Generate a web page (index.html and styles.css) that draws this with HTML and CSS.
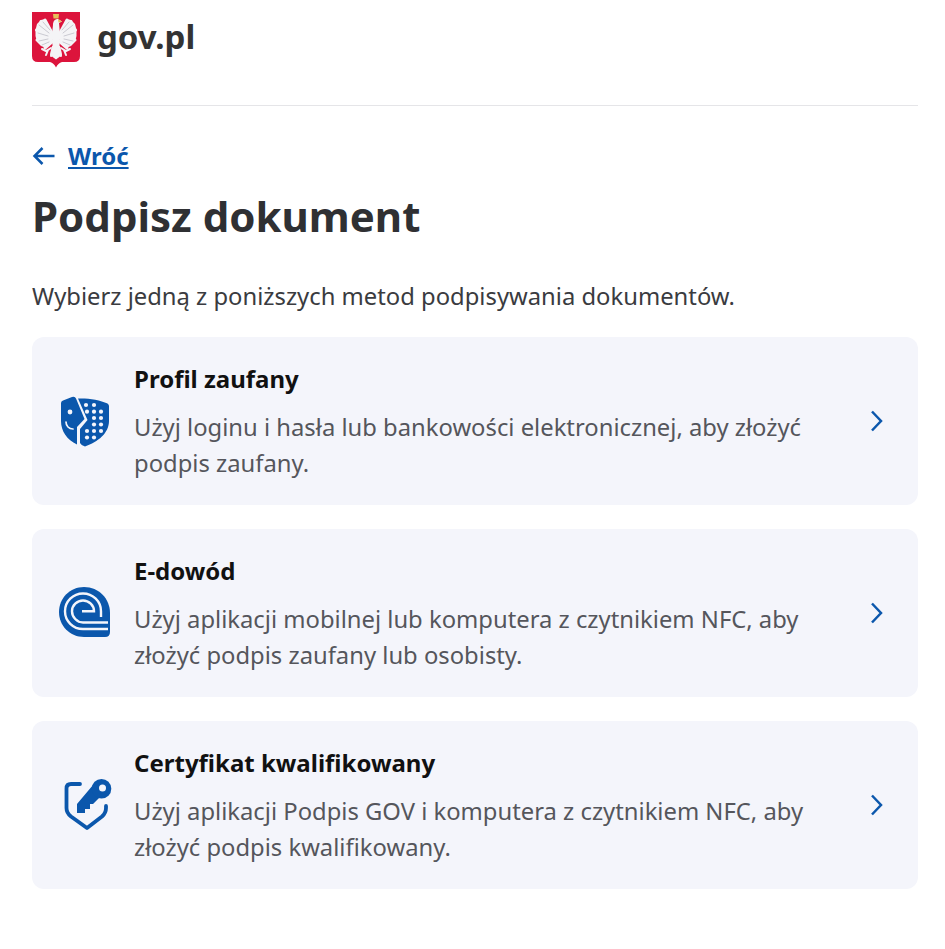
FILE: index.html
```html
<!DOCTYPE html>
<html lang="pl">
<head>
<meta charset="utf-8">
<title>Podpisz dokument</title>
<link rel="stylesheet" href="styles.css">
</head>
<body>
<header class="site-header">
  <svg class="emblem" viewBox="0 0 48 56" aria-hidden="true">
    <path fill="#dc143c" d="M0 0H48V44Q48 50 42 50H30Q26 51 24 55.500Q22 51 18 50H6Q0 50 0 44Z"/>
    <g id="half-eagle" fill="none" stroke="#f4f4f6" stroke-linecap="round">
      <path fill="#f4f4f6" stroke="none" d="M20 19L13 7L9 8L5 12L3.500 18L3.500 24L5 30L9 34L14 36L21 30Z"/>
      <g stroke-width="3">
        <path d="M20 21L13 8"/>
        <path d="M20 22L9 9.500"/>
        <path d="M20 24L4.500 18"/>
        <path d="M20 26L5 28"/>
        <path d="M21 29L13 36"/>
      </g>
      <g stroke="#bfbfc8" stroke-width=".8">
        <path d="M18 18L11 10"/>
        <path d="M17 21L7 13"/>
        <path d="M16 24L6 21"/>
        <path d="M16 27L7 29"/>
        <path d="M17 30L10 33"/>
      </g>
      <path stroke-width="2" d="M19 36L14 39L10 37M16 38L14 43M20 38L19 44"/>
    </g>
    <use href="#half-eagle" transform="matrix(-1 0 0 1 48 0)"/>
    <path fill="#f4f4f6" d="M21 13C21 9 23 7 26 7L30 9.500L27 11L28 22L27.500 34L24 36L20.500 34L20 22Z"/>
    <path fill="#f4f4f6" d="M20 34H28L30 43L24 47.500L18 43Z"/>
    <path fill="#e6bf5a" d="M21 2H27L26.500 6.500H21.500ZM26 7L30 9.500L26.500 10.500Z"/>
  </svg>
  <span class="brand">gov.pl</span>
</header>
<hr class="divider">
<main>
  <a class="back" href="#">
    <svg class="back-arrow" viewBox="0 0 24 20" aria-hidden="true"><path d="M22.500 10H2.500M10.500 2L2.500 10L10.500 18"/></svg>
    <span class="back-label">Wróć</span>
  </a>
  <h1 class="title">Podpisz dokument</h1>
  <p class="lead">Wybierz jedną z poniższych metod podpisywania dokumentów.</p>
  <ul class="methods">
    <li class="card">
      <svg class="card-icon" viewBox="-2 -1 54 54" aria-hidden="true">
        <path fill="#0b57ac" d="M1 8Q1 6 3 5.500L12 2Q15 1 16 3.500L24.500 24L17 32V49.500C7 45 1 36 1 26Z"/>
        <path fill="#0b57ac" d="M18 3.500C28 3 40 5 47.500 8.500Q49 9.500 49 11V26C49 38 38 47 25 51.500Q21 50 20 48V34L27.500 25Z"/>
        <circle cx="10" cy="17" r="2.400" fill="#f4f5fb"/>
        <path fill="none" stroke="#f4f5fb" stroke-width="1.700" stroke-linecap="round" d="M6 27C6 31 9 34 13 34"/>
        <g fill="#f4f5fb">
          <circle cx="26" cy="10" r="2.100"/><circle cx="34" cy="10" r="2.100"/>
          <circle cx="27" cy="16.700" r="2.100"/><circle cx="34" cy="16.700" r="2.100"/><circle cx="41" cy="16.700" r="2.100"/>
          <circle cx="34" cy="23" r="2.100"/><circle cx="41" cy="23" r="2.100"/>
          <circle cx="34" cy="29.500" r="2.100"/><circle cx="41" cy="29.500" r="2.100"/>
          <circle cx="27" cy="36" r="2.100"/><circle cx="34" cy="36" r="2.100"/><circle cx="41" cy="36" r="2.100"/>
          <circle cx="27" cy="42.500" r="2.100"/><circle cx="34" cy="42.500" r="2.100"/>
        </g>
      </svg>
      <div class="card-body">
        <h2 class="card-title">Profil zaufany</h2>
        <p class="card-text">Użyj loginu i hasła lub bankowości elektronicznej, aby złożyć podpis zaufany.</p>
      </div>
      <svg class="chevron" viewBox="0 0 14 24" aria-hidden="true"><path d="M2 2.500L11 12L2 21.500"/></svg>
    </li>
    <li class="card">
      <svg class="card-icon" viewBox="0 0 54 54" aria-hidden="true">
        <path fill="#0b57ac" d="M26 1C41 1 52 13 52 27V46Q52 51 47 51H26C12 51 1 40 1 26C1 12 12 1 26 1Z"/>
        <g fill="none" stroke="#f4f5fb" stroke-width="2.400">
          <path d="M50 43H25C15 43 7 35 7 25.250C7 15.500 15 7.500 25 7.500C35 7.500 43 15.500 43 25.250V31"/>
          <path d="M50 36.500H25C19 36.500 14 31 14 25.250C14 19.500 19 14.500 25 14.500C31 14.500 36 19.500 36 25.250H24"/>
        </g>
      </svg>
      <div class="card-body">
        <h2 class="card-title">E-dowód</h2>
        <p class="card-text">Użyj aplikacji mobilnej lub komputera z czytnikiem NFC, aby złożyć podpis zaufany lub osobisty.</p>
      </div>
      <svg class="chevron" viewBox="0 0 14 24" aria-hidden="true"><path d="M2 2.500L11 12L2 21.500"/></svg>
    </li>
    <li class="card">
      <svg class="card-icon" viewBox="-4 0 54 54" aria-hidden="true">
        <path fill="none" stroke="#0b57ac" stroke-width="3.800" stroke-linecap="round" stroke-linejoin="round" d="M18 6H9Q4.500 6 4.500 10.500V30Q4.500 35 9 38.500L25 50L40 38.500Q44 35 44 30V28"/>
        <path fill="#0b57ac" d="M31 7L15 26V35H23V31H28V26H31L38 19Z"/>
        <circle cx="39.500" cy="10.800" r="9.800" fill="#0b57ac"/>
        <circle cx="40.500" cy="10" r="3.500" fill="#f4f5fb"/>
      </svg>
      <div class="card-body">
        <h2 class="card-title">Certyfikat kwalifikowany</h2>
        <p class="card-text">Użyj aplikacji Podpis GOV i komputera z czytnikiem NFC, aby złożyć podpis kwalifikowany.</p>
      </div>
      <svg class="chevron" viewBox="0 0 14 24" aria-hidden="true"><path d="M2 2.500L11 12L2 21.500"/></svg>
    </li>
  </ul>
</main>
</body>
</html>
```
FILE: styles.css
```css
* { box-sizing: border-box; }
html, body { margin: 0; padding: 0; background: #fff; }
body {
  padding: 12px 27px 0 32px;
  font-family: "Noto Sans", "Open Sans", sans-serif;
  color: #2f3033;
}
.site-header {
  display: flex;
  align-items: flex-start;
  gap: 17px;
  height: 55px;
}
.emblem { width: 48px; height: 56px; flex: none; }
.brand {
  font-size: 33px;
  font-weight: 700;
  line-height: 50px;
  color: #333;
}
.divider {
  margin: 38px 0 0;
  border: 0;
  border-top: 1px solid #e5e5e8;
}
.back {
  display: flex;
  align-items: center;
  gap: 12px;
  margin-top: 34px;
  height: 30px;
  color: #0b57ac;
  text-decoration: none;
}
.back-arrow { width: 24px; height: 20px; margin-top: 2px; fill: none; stroke: #0b57ac; stroke-width: 2.500; }
.back-label { font-size: 24px; font-weight: 700; text-decoration: underline; }
.title {
  margin: 20px 0 0;
  font-size: 42px;
  line-height: 52px;
  font-weight: 700;
  color: #2f3033;
}
.lead {
  margin: 36px 0 0;
  font-size: 23.800px;
  line-height: 36px;
  color: #3a3b40;
}
.methods {
  list-style: none;
  margin: 23px 0 0;
  padding: 0;
  display: flex;
  flex-direction: column;
  gap: 24px;
}
.card {
  display: flex;
  align-items: center;
  height: 168px;
  padding: 0 34px 0 26px;
  border-radius: 12px;
  background: #f4f5fb;
}
.card-icon { width: 54px; height: 54px; flex: none; }
.card-body { flex: 1; margin-left: 22px; padding-right: 30px; }
.card-title {
  margin: 0;
  font-size: 24px;
  line-height: 36px;
  font-weight: 700;
  color: #111;
}
.card-text {
  margin: 12px 0 0;
  font-size: 23.800px;
  line-height: 36px;
  color: #55565c;
}
.chevron { width: 14px; height: 24px; flex: none; fill: none; stroke: #0b57ac; stroke-width: 2.500; }
```
